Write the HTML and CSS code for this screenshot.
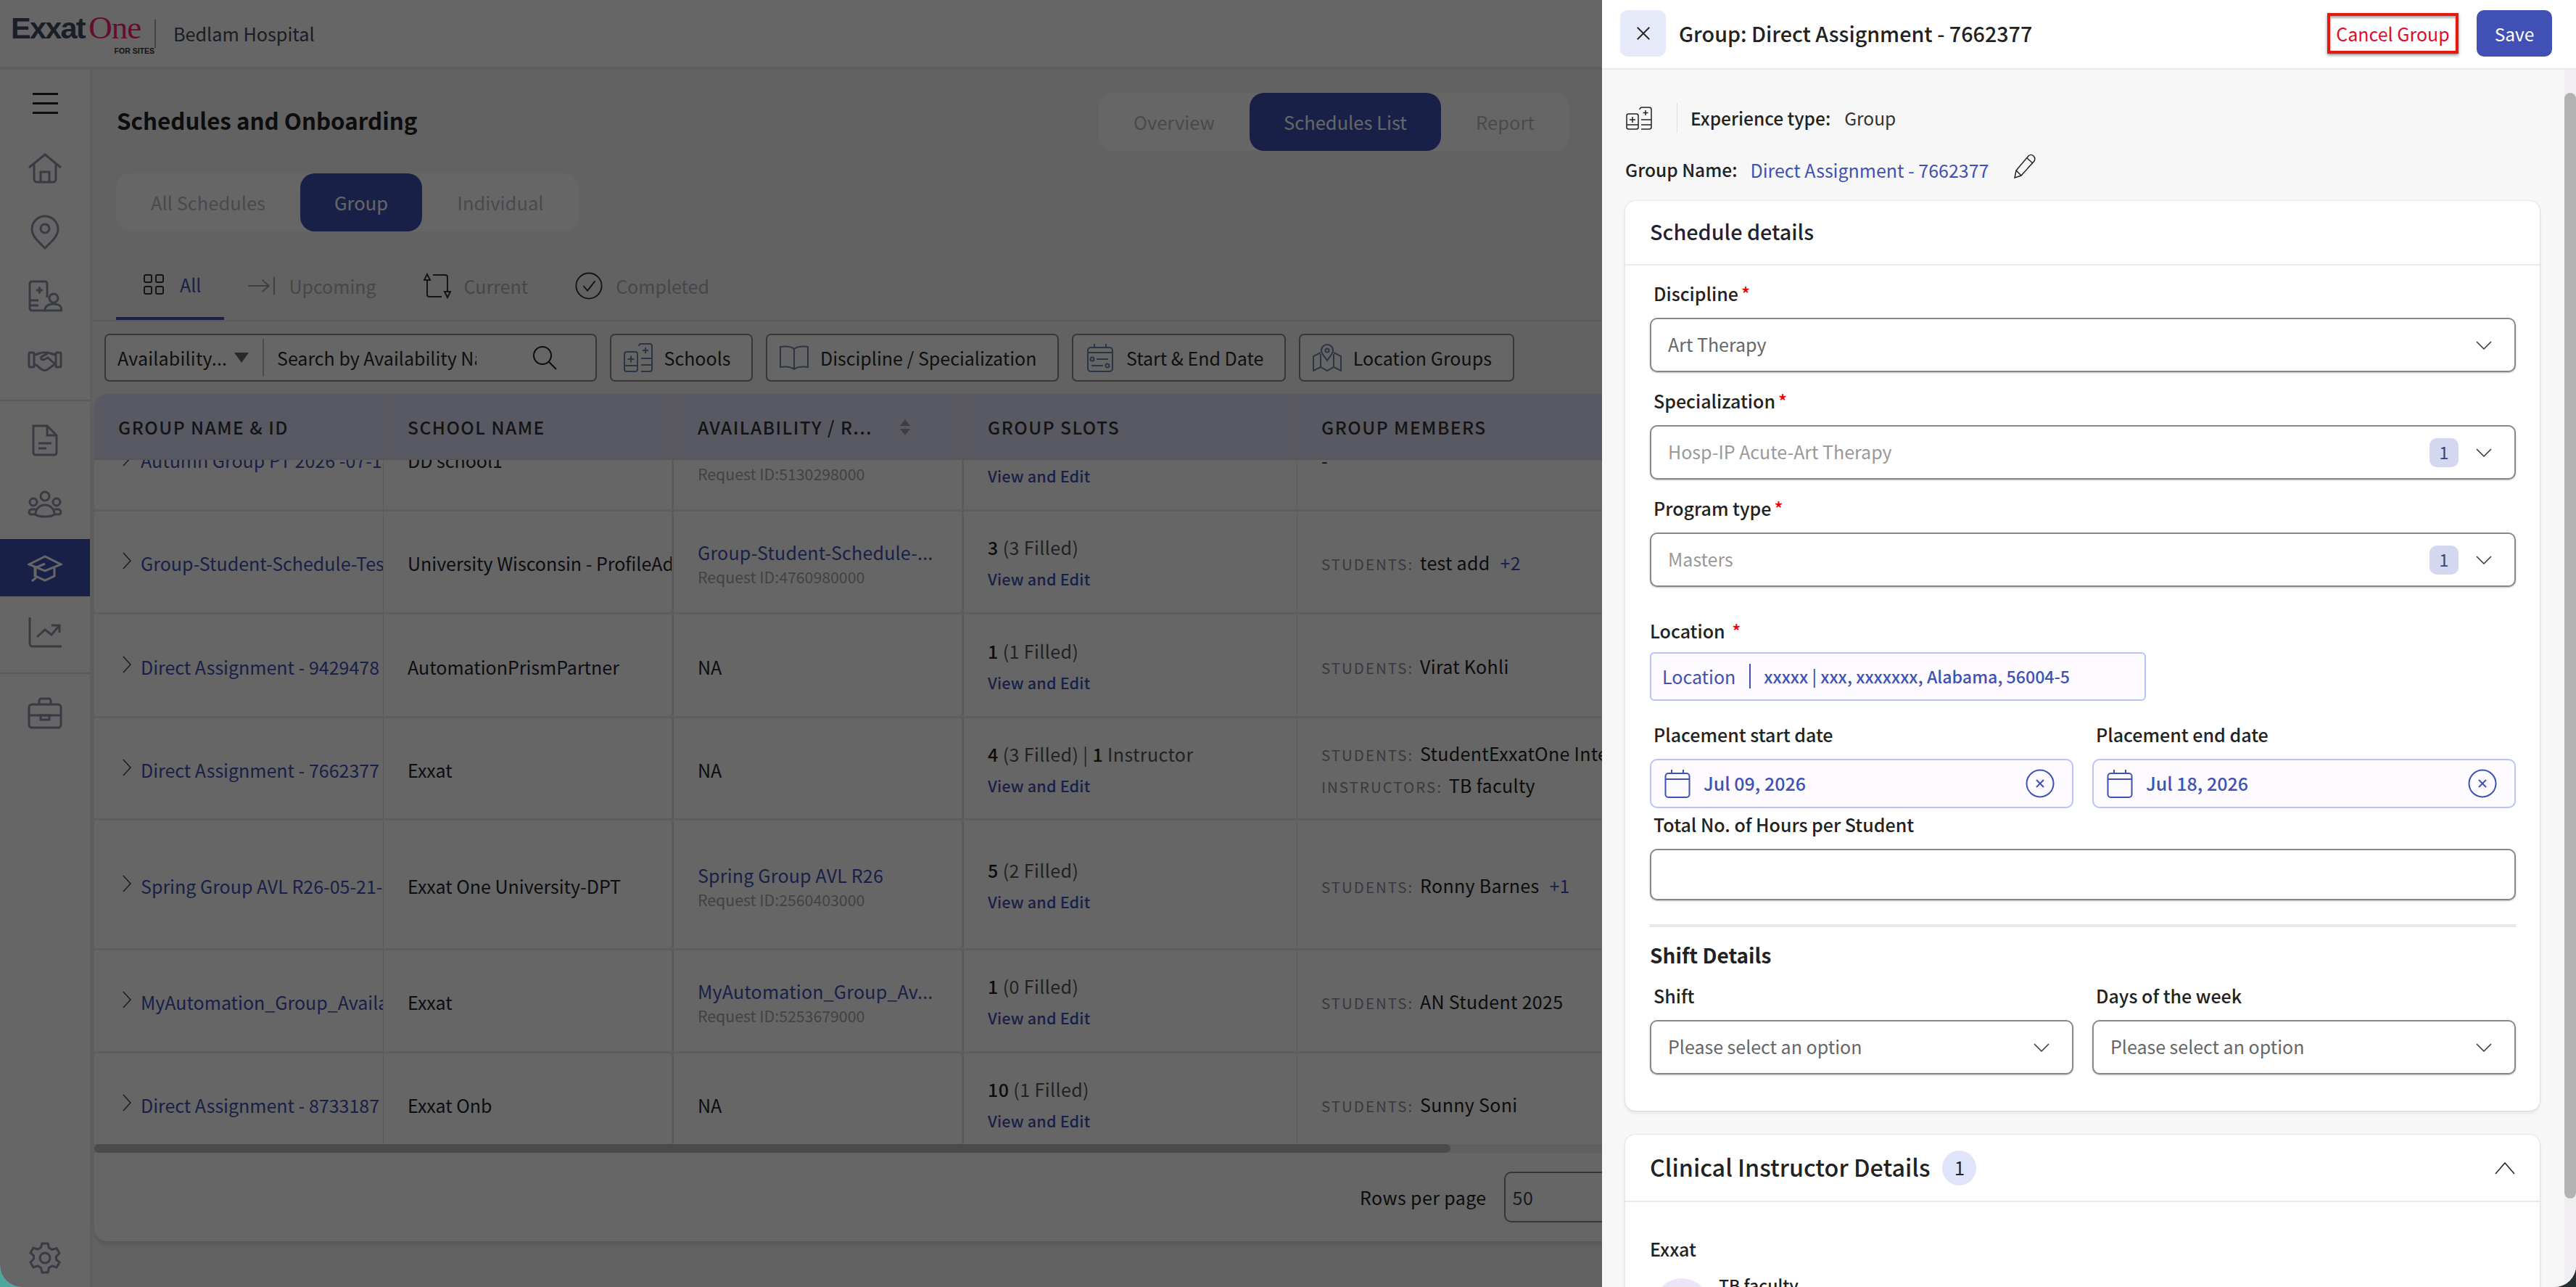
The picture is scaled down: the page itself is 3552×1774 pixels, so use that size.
FILE: index.html
```html
<!DOCTYPE html>
<html lang="en">
<head>
    <meta charset="UTF-8">
    <meta name="viewport" content="width=device-width, initial-scale=1.0">
    <title>Schedules and Onboarding</title>
    <link rel="stylesheet" href="styles.css">
</head>
<body>
<div class="app">
    <header class="app-head">
        <div class="logo">
            <div class="logo-word"><span class="logo-exxat">Exxat</span> <span class="logo-one">One</span></div>
            <div class="logo-sub">FOR SITES</div>
        </div>
        <div class="app-site">Bedlam Hospital</div>
    </header>

    <div class="app-body">
        <nav class="sidebar">
            <div class="side-menu"><span></span><span></span><span></span></div>
            <div class="side-item">
                <svg class="side-icon" viewBox="0 0 48 48"><path d="M2 23 24 5l22 18"/><path d="M9 18v21a4 4 0 0 0 4 4h22a4 4 0 0 0 4-4V18"/><path d="M18 43V29h12v14"/></svg>
            </div>
            <div class="side-item">
                <svg class="side-icon" viewBox="0 0 48 48"><path d="M24 2C14 2 6 10 6 20c0 10 10 18 18 26 8-8 18-16 18-26C42 10 34 2 24 2z"/><circle cx="24" cy="19" r="6"/></svg>
            </div>
            <div class="side-item">
                <svg class="side-icon" viewBox="0 0 48 48"><path d="M27 26V7a3 3 0 0 0-3-3H6a3 3 0 0 0-3 3v34a3 3 0 0 0 3 3h19"/><path d="M12 16h9M16.500 11.500v9"/><path d="M3 30h12M3 37h12"/><circle cx="36" cy="27" r="6"/><path d="M24 44c0-7 5-9 12-9s11 2 11 9z"/></svg>
            </div>
            <div class="side-item">
                <svg class="side-icon" viewBox="0 0 48 48"><rect x="2" y="14" width="7" height="20" rx="1.500"/><rect x="39" y="14" width="7" height="20" rx="1.500"/><path d="M9 17c5 0 7-3 12-3h6c5 0 7 3 12 3M9 31h3l7 6c3 2 6 2 9 0l11-8"/><path d="M28 15l-9 5c-2 3 2 5 5 3l4-2 9 8"/></svg>
            </div>
            <div class="side-line"></div>
            <div class="side-item">
                <svg class="side-icon" viewBox="0 0 48 48"><path d="M8 3h19l13 13v24a3 3 0 0 1-3 3H11a3 3 0 0 1-3-3V3z"/><path d="M27 3v13h13"/><path d="M15 27h18M15 34h11"/></svg>
            </div>
            <div class="side-item">
                <svg class="side-icon" viewBox="0 0 48 48"><circle cx="24" cy="12" r="6"/><circle cx="8" cy="20" r="5"/><circle cx="40" cy="20" r="5"/><path d="M11 37c0-8 6-13 13-13s13 5 13 13c-3 4-23 4-26 0z"/><path d="M11 30H5c-4 2-4 6 0 7h6M37 30h6c4 2 4 6 0 7h-6"/></svg>
            </div>
            <div class="side-item side-active">
                <svg class="side-icon" viewBox="0 0 48 48"><path d="M24 8 2 19l22 9 22-9z"/><path d="M11 24v11l13 6 13-6V24"/><path d="M24 18 10 24v12"/><path d="M6 42l6-5"/></svg>
            </div>
            <div class="side-item">
                <svg class="side-icon" viewBox="0 0 48 48"><path d="M3 4v36a4 4 0 0 0 4 4h40"/><path d="M13 31l11-10 9 7 11-13"/><path d="M33 15h11v10"/></svg>
            </div>
            <div class="side-line side-line-low"></div>
            <div class="side-item">
                <svg class="side-icon" viewBox="0 0 48 48"><rect x="2" y="12" width="44" height="32" rx="4"/><path d="M16 12V7a3 3 0 0 1 3-3h10a3 3 0 0 1 3 3v5"/><path d="M2 27h44"/><rect x="18" y="27" width="12" height="6"/></svg>
            </div>
            <div class="side-item side-gear">
                <svg class="side-icon" viewBox="0 0 48 48"><circle cx="24" cy="24" r="7"/><path d="M20 4h8l1.500 6 4.500 2.500 6-2 4 7-4.500 4.300v4.400L44 30l-4 7-6-2-4.500 2.500L28 44h-8l-1.500-6.500L14 35l-6 2-4-7 4.500-4.800v-4.400L4 17l4-7 6 2 4.500-2.500z"/></svg>
            </div>
        </nav>

        <main class="main">
            <div class="page-head">
                <h1 class="page-title">Schedules and Onboarding</h1>
                <div class="segment segment-views">
                    <span class="seg-item seg-overview">Overview</span>
                    <span class="seg-item seg-on seg-list">Schedules List</span>
                    <span class="seg-item seg-report">Report</span>
                </div>
            </div>

            <div class="segment segment-kind">
                <span class="seg-item seg-all">All Schedules</span>
                <span class="seg-item seg-on seg-group">Group</span>
                <span class="seg-item seg-indiv">Individual</span>
            </div>

            <div class="tabs">
                <div class="tab tab-on">
                    <svg class="tab-icon" viewBox="0 0 28 28"><rect x="1" y="1" width="10" height="10" rx="2"/><rect x="17" y="1" width="10" height="10" rx="2"/><rect x="1" y="17" width="10" height="10" rx="2"/><rect x="17" y="17" width="10" height="10" rx="2"/></svg>
                    <span>All</span>
                </div>
                <div class="tab">
                    <svg class="tab-icon tab-icon-wide tab-icon-dim" viewBox="0 0 37 28"><path d="M0 14h28M19 6l9 8-9 8"/><path d="M35 2v24"/></svg>
                    <span>Upcoming</span>
                </div>
                <div class="tab">
                    <svg class="tab-icon tab-icon-wide" viewBox="0 0 38 40"><path d="M5 12v20a3 3 0 0 0 3 3h17"/><path d="M13 5h17a3 3 0 0 1 3 3v20"/><path d="M1 12l4-8 4 8zM29 28l4 8 4-8z"/></svg>
                    <span>Current</span>
                </div>
                <div class="tab">
                    <svg class="tab-icon tab-icon-wide" viewBox="0 0 40 40"><circle cx="20" cy="20" r="18.500"/><path d="M12 20l6 7 11-14"/></svg>
                    <span>Completed</span>
                </div>
            </div>

            <div class="toolbar">
                <div class="search-box">
                    <span class="search-type">Availability...</span>
                    <span class="search-caret"></span>
                    <span class="search-text">Search by Availability Name</span>
                    <svg class="search-icon" viewBox="0 0 34 34"><circle cx="14" cy="14" r="12"/><path d="M23 23l10 10"/></svg>
                </div>
                <div class="chip">
                    <svg class="chip-icon" viewBox="0 0 40 40"><rect x="1" y="12" width="18" height="27" rx="3"/><path d="M5.500 22h9M10 17.500v9M1 31h18M21 4a3 3 0 0 1 3-3h12a3 3 0 0 1 3 3v32a3 3 0 0 1-3 3H24M30 6v8M26 10h8M24 21h15M24 30h15"/></svg>
                    <span>Schools</span>
                </div>
                <div class="chip">
                    <svg class="chip-icon" viewBox="0 0 40 40"><path d="M20 8C15 4 8 4 1 5v28c7-1 14-1 19 3 5-4 12-4 19-3V5c-7-1-14-1-19 3zM20 8v28"/></svg>
                    <span>Discipline / Specialization</span>
                </div>
                <div class="chip">
                    <svg class="chip-icon" viewBox="0 0 36 40"><rect x="1" y="6" width="34" height="33" rx="4"/><path d="M10 1v5M26 1v5M1 13h34M13 22h16M6 31h16"/><circle cx="7" cy="22" r="2.500"/><circle cx="28" cy="31" r="2.500"/></svg>
                    <span>Start &amp; End Date</span>
                </div>
                <div class="chip">
                    <svg class="chip-icon" viewBox="0 0 40 40"><path d="M11 13 1 18v20l10-5 9 5 9-5 10 5V18l-10-5"/><path d="M11 15v18M29 15v18"/><path d="M20 2c-5 0-8 4-8 8 0 5 5 9 8 14 3-5 8-9 8-14 0-4-3-8-8-8z"/><circle cx="20" cy="10" r="2.500"/></svg>
                    <span>Location Groups</span>
                </div>
            </div>

            <section class="table-card">
                <div class="row row-head">
                    <div class="cell"><span class="th">GROUP NAME &amp; ID</span></div>
                    <div class="cell cell-thick"><span class="th">SCHOOL NAME</span></div>
                    <div class="cell cell-thick"><span class="th">AVAILABILITY / R...</span><svg class="sort" viewBox="0 0 16 22"><path d="M8 0l7 9H1zM8 22 1 13h14z"/></svg></div>
                    <div class="cell"><span class="th">GROUP SLOTS</span></div>
                    <div class="cell cell-last"><span class="th">GROUP MEMBERS</span></div>
                </div>
                <div class="table-window">
                    <div class="table-rows">
                        <div class="row">
                            <div class="cell cell-name"><svg class="expand" viewBox="0 0 14 24"><path d="M2 1l10 11L2 23"/></svg><a class="name-link">Autumn Group PT 2026 -07-1</a></div>
                            <div class="cell cell-thick">DD school1</div>
                            <div class="cell cell-thick cell-stack"><a class="avail-link">&nbsp;</a><span class="req-id">Request ID:5130298000</span></div>
                            <div class="cell cell-stack"><span class="slots">&nbsp;</span><a class="edit-link">View and Edit</a></div>
                            <div class="cell cell-last">-</div>
                        </div>
                        <div class="row">
                            <div class="cell cell-name"><svg class="expand" viewBox="0 0 14 24"><path d="M2 1l10 11L2 23"/></svg><a class="name-link">Group-Student-Schedule-Test</a></div>
                            <div class="cell cell-thick">University Wisconsin - ProfileAd</div>
                            <div class="cell cell-thick cell-stack"><a class="avail-link">Group-Student-Schedule-...</a><span class="req-id">Request ID:4760980000</span></div>
                            <div class="cell cell-stack"><span class="slots"><b>3</b> (3 Filled)</span><a class="edit-link">View and Edit</a></div>
                            <div class="cell cell-last"><span class="member"><span class="member-key">STUDENTS:</span> test add <a class="member-more">+2</a></span></div>
                        </div>
                        <div class="row row-mid">
                            <div class="cell cell-name"><svg class="expand" viewBox="0 0 14 24"><path d="M2 1l10 11L2 23"/></svg><a class="name-link">Direct Assignment - 9429478</a></div>
                            <div class="cell cell-thick">AutomationPrismPartner</div>
                            <div class="cell cell-thick">NA</div>
                            <div class="cell cell-stack"><span class="slots"><b>1</b> (1 Filled)</span><a class="edit-link">View and Edit</a></div>
                            <div class="cell cell-last"><span class="member"><span class="member-key">STUDENTS:</span> Virat Kohli</span></div>
                        </div>
                        <div class="row row-low">
                            <div class="cell cell-name"><svg class="expand" viewBox="0 0 14 24"><path d="M2 1l10 11L2 23"/></svg><a class="name-link">Direct Assignment - 7662377</a></div>
                            <div class="cell cell-thick">Exxat</div>
                            <div class="cell cell-thick">NA</div>
                            <div class="cell cell-stack"><span class="slots"><b>4</b> (3 Filled) | <b>1</b> Instructor</span><a class="edit-link">View and Edit</a></div>
                            <div class="cell cell-last cell-members"><span class="member"><span class="member-key">STUDENTS:</span> StudentExxatOne Intern</span><span class="member"><span class="member-key">INSTRUCTORS:</span> TB faculty</span></div>
                        </div>
                        <div class="row row-tall">
                            <div class="cell cell-name"><svg class="expand" viewBox="0 0 14 24"><path d="M2 1l10 11L2 23"/></svg><a class="name-link">Spring Group AVL R26-05-21-</a></div>
                            <div class="cell cell-thick">Exxat One University-DPT</div>
                            <div class="cell cell-thick cell-stack"><a class="avail-link">Spring Group AVL R26</a><span class="req-id">Request ID:2560403000</span></div>
                            <div class="cell cell-stack"><span class="slots"><b>5</b> (2 Filled)</span><a class="edit-link">View and Edit</a></div>
                            <div class="cell cell-last"><span class="member"><span class="member-key">STUDENTS:</span> Ronny Barnes <a class="member-more">+1</a></span></div>
                        </div>
                        <div class="row">
                            <div class="cell cell-name"><svg class="expand" viewBox="0 0 14 24"><path d="M2 1l10 11L2 23"/></svg><a class="name-link">MyAutomation_Group_Availability</a></div>
                            <div class="cell cell-thick">Exxat</div>
                            <div class="cell cell-thick cell-stack"><a class="avail-link">MyAutomation_Group_Av...</a><span class="req-id">Request ID:5253679000</span></div>
                            <div class="cell cell-stack"><span class="slots"><b>1</b> (0 Filled)</span><a class="edit-link">View and Edit</a></div>
                            <div class="cell cell-last"><span class="member"><span class="member-key">STUDENTS:</span> AN Student 2025</span></div>
                        </div>
                        <div class="row">
                            <div class="cell cell-name"><svg class="expand" viewBox="0 0 14 24"><path d="M2 1l10 11L2 23"/></svg><a class="name-link">Direct Assignment - 8733187</a></div>
                            <div class="cell cell-thick">Exxat Onb</div>
                            <div class="cell cell-thick">NA</div>
                            <div class="cell cell-stack"><span class="slots"><b>10</b> (1 Filled)</span><a class="edit-link">View and Edit</a></div>
                            <div class="cell cell-last"><span class="member"><span class="member-key">STUDENTS:</span> Sunny Soni</span></div>
                        </div>
                    </div>
                </div>
                <div class="hscroll"><div class="hscroll-thumb"></div></div>
                <div class="table-foot">
                    <span>Rows per page</span>
                    <span class="rows-select">50</span>
                </div>
            </section>
        </main>
    </div>

    <div class="backdrop"></div>

    <aside class="drawer">
        <div class="drawer-head">
            <button class="btn-close">
                <svg viewBox="0 0 24 24"><path d="M3 3l18 18M21 3 3 21"/></svg>
            </button>
            <div class="drawer-title">Group: Direct Assignment - 7662377</div>
            <button class="btn-cancel">Cancel Group</button>
            <button class="btn-save">Save</button>
        </div>

        <div class="drawer-body">
            <div class="drawer-scroll">
                <div class="exp-row">
                    <svg class="exp-icon" viewBox="0 0 36 32"><rect x="1" y="10" width="16" height="21" rx="2.500"/><path d="M5 18h8M9 14v8M1 25h16M19 4a3 3 0 0 1 3-3h10a3 3 0 0 1 3 3v24a3 3 0 0 1-3 3H21M27 5v7M23.500 8.500h7M21 18h14M21 25h14"/></svg>
                    <span class="exp-label">Experience type:</span>
                    <span class="exp-value">Group</span>
                </div>
                <div class="name-row">
                    <span class="exp-label">Group Name:</span>
                    <a class="group-name">Direct Assignment - 7662377</a>
                    <svg class="pencil" viewBox="0 0 34 34"><path d="M5 23 22 3c2-2 5-2 7 0s2 5 1 7L12 30l-9 3z"/><path d="M20 6l8 7M5 23l7 7"/></svg>
                </div>

                <section class="card">
                    <h2 class="card-title">Schedule details</h2>
                    <div class="card-form">
                        <label class="field-label">Discipline<span class="req">*</span></label>
                        <div class="select">
                            <span class="select-text">Art Therapy</span>
                            <svg class="chev" viewBox="0 0 22 14"><path d="M1 2l10 10L21 2"/></svg>
                        </div>

                        <label class="field-label">Specialization<span class="req">*</span></label>
                        <div class="select">
                            <span class="select-text select-dim">Hosp-IP Acute-Art Therapy</span>
                            <span class="count">1</span>
                            <svg class="chev" viewBox="0 0 22 14"><path d="M1 2l10 10L21 2"/></svg>
                        </div>

                        <label class="field-label">Program type<span class="req">*</span></label>
                        <div class="select">
                            <span class="select-text select-dim">Masters</span>
                            <span class="count">1</span>
                            <svg class="chev" viewBox="0 0 22 14"><path d="M1 2l10 10L21 2"/></svg>
                        </div>

                        <label class="field-label field-location">Location <span class="req">*</span></label>
                        <div class="location-box">
                            <span class="loc-tag">Location</span>
                            <span class="loc-text">xxxxx | xxx, xxxxxxx, Alabama, 56004-5</span>
                        </div>

                        <div class="two-col date-labels">
                            <label class="field-label">Placement start date</label>
                            <label class="field-label">Placement end date</label>
                        </div>
                        <div class="two-col">
                            <div class="date-box">
                                <svg class="cal" viewBox="0 0 36 40"><rect x="1.500" y="6" width="33" height="33" rx="4"/><path d="M10 1v5M26 1v5M1.500 14h33"/></svg>
                                <span class="date-text">Jul 09, 2026</span>
                                <svg class="clear" viewBox="0 0 40 40"><circle cx="20" cy="20" r="18.500"/><path d="M15 15l10 10M25 15 15 25"/></svg>
                            </div>
                            <div class="date-box">
                                <svg class="cal" viewBox="0 0 36 40"><rect x="1.500" y="6" width="33" height="33" rx="4"/><path d="M10 1v5M26 1v5M1.500 14h33"/></svg>
                                <span class="date-text">Jul 18, 2026</span>
                                <svg class="clear" viewBox="0 0 40 40"><circle cx="20" cy="20" r="18.500"/><path d="M15 15l10 10M25 15 15 25"/></svg>
                            </div>
                        </div>

                        <label class="field-label field-total">Total No. of Hours per Student</label>
                        <div class="text-input"></div>

                        <div class="form-line"></div>
                        <h3 class="sub-title">Shift Details</h3>

                        <div class="two-col shift-labels">
                            <label class="field-label">Shift</label>
                            <label class="field-label">Days of the week</label>
                        </div>
                        <div class="two-col">
                            <div class="select select-last">
                                <span class="select-text">Please select an option</span>
                                <svg class="chev" viewBox="0 0 22 14"><path d="M1 2l10 10L21 2"/></svg>
                            </div>
                            <div class="select select-last">
                                <span class="select-text">Please select an option</span>
                                <svg class="chev" viewBox="0 0 22 14"><path d="M1 2l10 10L21 2"/></svg>
                            </div>
                        </div>
                    </div>
                </section>

                <section class="card card-open">
                    <div class="card-bar">
                        <h2 class="card-big">Clinical Instructor Details</h2>
                        <span class="card-count">1</span>
                        <svg class="chev-up" viewBox="0 0 28 18"><path d="M1 17 14 2l13 15"/></svg>
                    </div>
                    <div class="card-form">
                        <div class="school-name">Exxat</div>
                        <div class="person">
                            <span class="avatar"></span>
                            <span class="person-name">TB faculty</span>
                        </div>
                    </div>
                </section>
            </div>
            <div class="drawer-track"><div class="drawer-thumb"></div></div>
        </div>
    </aside>
</div>
</body>
</html>
```

FILE: styles.css
```css
* { box-sizing: border-box; }

html, body { margin: 0; height: 100%; }

body {
    background: linear-gradient(90deg, #4ea79c 0 3%, #26312f 97%);
    font-family: "Noto Sans CJK SC", "Noto Sans", sans-serif;
    font-size: 25px;
    line-height: 36px;
    color: #1f2430;
    overflow: hidden;
}

a { color: #3f51b5; }
h1, h2, h3 { margin: 0; }
button { font-family: inherit; border: none; padding: 0; }

.app {
    position: relative;
    width: 3552px;
    height: 1774px;
    background: #fff;
    border-radius: 0 0 30px 30px;
    overflow: hidden;
}

/* Top bar */
.app-head {
    display: flex;
    align-items: center;
    height: 96px;
    padding-left: 15px;
    border-bottom: 4px solid #eeeef2;
}

.logo {
    width: 198px;
    height: 64px;
    margin-top: 4px;
}

.logo-word { line-height: 44px; white-space: nowrap; word-spacing: 0; }

.logo-exxat {
    font-family: "Liberation Sans", sans-serif;
    font-weight: bold;
    font-size: 41.500px;
    letter-spacing: -1.800px;
    color: #3f4d63;
}

.logo-one {
    font-family: "Liberation Serif", serif;
    font-size: 45px;
    letter-spacing: -1px;
    color: #ff2272;
}

.logo-sub {
    font-family: "Liberation Sans", sans-serif;
    font-weight: bold;
    font-size: 10.500px;
    line-height: 12px;
    text-align: right;
    color: #333;
}

.app-site {
    padding-left: 24px;
    border-left: 2px solid #a8aab2;
    line-height: 39px;
    font-size: 25.200px;
    color: #43495e;
}

.app-body { display: flex; height: 1678px; }

/* Sidebar */
.sidebar {
    display: flex;
    flex-direction: column;
    flex: none;
    width: 128px;
    border-right: 4px solid #eeeef2;
}

.side-menu {
    display: flex;
    flex-direction: column;
    justify-content: center;
    gap: 10px;
    align-items: center;
    height: 92px;
}

.side-menu span { width: 35px; height: 3px; background: #222; }

.side-item {
    display: flex;
    align-items: center;
    justify-content: center;
    height: 88px;
}

.side-icon {
    width: 48px;
    height: 48px;
    fill: none;
    stroke: #8c93a8;
    stroke-width: 3;
}

.side-active { height: 79px; margin: 3px 0 5px; background: #3f51b5; }
.side-active .side-icon { stroke: #fff; }

.side-line { height: 2px; margin: 11px 0; background: #e4e4e8; }
.side-line-low { margin: 12px 0 10px; }
.side-gear { margin-top: auto; height: 80px; }

/* Main column */
.main { flex: 1; min-width: 0; background: #f5f5f5; }

.page-head {
    display: flex;
    align-items: center;
    justify-content: space-between;
    padding: 32px 1388px 0 33px;
}

.page-title { font-size: 31.300px; line-height: 76px; height: 80px; font-weight: 600; color: #222; }

.segment {
    display: flex;
    height: 80px;
    background: #fff;
    border-radius: 20px;
    color: #b6b9c4;
    font-size: 25.500px;
}

.segment-kind { width: 638px; margin: 31px 0 0 32px; }

.seg-item {
    display: flex;
    align-items: center;
    justify-content: center;
    flex: none;
    border-radius: 20px;
}

.seg-on { background: #3f51b5; color: #fff; }
.seg-all { width: 254px; }
.seg-group { width: 168px; }
.seg-indiv { width: 216px; }
.seg-overview { width: 208px; }
.seg-list { width: 264px; }
.seg-report { width: 177px; }

/* Status tabs */
.tabs {
    display: flex;
    height: 124px;
    padding-left: 32px;
    border-bottom: 2px solid #e2e2e6;
    color: #aeb1bc;
    font-size: 25px;
}

.tab {
    display: flex;
    align-items: center;
    gap: 18px;
    height: 122px;
    padding: 28px 32px 0 33px;
}

.tab-on {
    gap: 22px;
    padding-left: 38px;
    color: #3f51b5;
    border-bottom: 4px solid #3f51b5;
}

.tab-icon {
    flex: none;
    width: 28px;
    height: 28px;
    fill: none;
    stroke: #333;
    stroke-width: 2;
}

.tab-icon-wide { width: 38px; height: 40px; }
.tab-icon-dim { stroke: #9da1ac; }

/* Filters */
.toolbar {
    display: flex;
    gap: 17.500px;
    height: 100px;
    padding: 17px 0 0 16px;
}

.search-box, .chip {
    display: flex;
    align-items: center;
    height: 66px;
    background: #fff;
    border: 2px solid #8a8a8a;
    border-radius: 7px;
    color: #2a2a2a;
    font-size: 25px;
    white-space: nowrap;
}

.search-box { width: 679px; padding-left: 16px; }
.search-type { width: 153px; letter-spacing: .2px; }

.search-caret {
    width: 0;
    height: 0;
    margin-left: 8px;
    border: 10px solid transparent;
    border-top: 14px solid #666;
    border-bottom: 0;
}

.search-text {
    flex: none;
    width: 295px;
    margin-left: 19px;
    padding-left: 18px;
    overflow: hidden;
    line-height: 52px;
    border-left: 2px solid #bbb;
}

.search-icon {
    flex: none;
    width: 34px;
    height: 36px;
    margin-left: 77px;
    fill: none;
    stroke: #222;
    stroke-width: 2;
}

.chip { padding: 0 29px 0 17px; gap: 16px; }

.chip-icon {
    flex: none;
    width: 40px;
    height: 40px;
    fill: none;
    stroke: #6e86a8;
    stroke-width: 2;
}

/* Table */
.table-card {
    width: 3422px;
    height: 1168px;
    margin-left: 2px;
    background: #fff;
    border-radius: 18px;
    box-shadow: 0 4px 6px rgba(0, 0, 0, .12);
}

.row {
    display: grid;
    grid-template-columns: 399px 400px 400px 460px 1fr;
    height: 142px;
    border-bottom: 3px solid #ececef;
}

.row-mid { height: 143px; }
.row-low { height: 141px; }
.row-tall { height: 179px; }

.row-head {
    height: 91px;
    background: #dcdff5;
    border-radius: 18px 18px 0 0;
    border-bottom: 2px solid #d4d6e4;
}

.cell {
    display: flex;
    align-items: center;
    min-width: 0;
    padding: 3px 0 0 33px;
    border-right: 1px solid #e4e4ea;
    white-space: nowrap;
    overflow: hidden;
}

.cell-thick { border-right-width: 3px; border-right-color: #e4e4ee; }
.cell-last { border-right: 0; }
.cell-stack { flex-direction: column; align-items: flex-start; justify-content: center; }
.cell-members { flex-direction: column; align-items: flex-start; justify-content: center; gap: 6px; }

.th { font-size: 24.500px; font-weight: 500; letter-spacing: 1.500px; color: #333; }

.sort { width: 16px; height: 22px; margin-left: 37px; fill: #999; }

.table-window { height: 943px; overflow: hidden; }
.table-rows { margin-top: -71px; }

.cell-name { padding-left: 38px; }

.expand {
    flex: none;
    width: 14px;
    height: 24px;
    margin: -6px 12px 0 0;
    fill: none;
    stroke: #444;
    stroke-width: 1.500;
}

.name-link { font-size: 25px; }
.avail-link { font-size: 25px; letter-spacing: .2px; line-height: 38px; }
.req-id { font-size: 21.300px; line-height: 30px; color: #a4a6b0; }

.slots { font-size: 25px; letter-spacing: .4px; line-height: 40px; color: #555; }
.slots b { font-weight: 500; color: #222; }

.edit-link { margin-top: 4px; font-size: 21.500px; font-weight: 500; line-height: 40px; letter-spacing: .2px; }

.member { font-size: 25px; line-height: 36px; letter-spacing: .3px; color: #222; }
.member-key { margin-right: 3px; font-size: 20.500px; letter-spacing: 2px; color: #8c90a0; }
.member-more { margin-left: 8px; }

.hscroll { height: 12px; background: #eeeeee; }

.hscroll-thumb {
    width: 1870px;
    height: 12px;
    background: #bcbcbc;
    border-radius: 6px;
}

.table-foot {
    display: flex;
    align-items: center;
    gap: 24px;
    height: 122px;
    padding-left: 1745px;
    font-size: 25px;
    letter-spacing: .4px;
    color: #222;
}

.rows-select {
    width: 200px;
    height: 70px;
    padding-left: 10px;
    line-height: 66px;
    border: 2px solid #888;
    border-radius: 10px;
    color: #444;
}

.backdrop {
    position: absolute;
    inset: 0;
    background: rgba(0, 0, 0, .6);
}

/* Drawer */
.drawer {
    position: absolute;
    top: 0;
    right: 0;
    bottom: 0;
    display: flex;
    flex-direction: column;
    width: 1343px;
    background: #f7f7f7;
}

.drawer-head {
    display: flex;
    align-items: center;
    flex: none;
    height: 96px;
    padding: 0 33px 2px 25px;
    background: #fff;
    border-bottom: 2px solid #e8e9ef;
}

.btn-close {
    display: flex;
    align-items: center;
    justify-content: center;
    width: 63px;
    height: 64px;
    background: #e6e9f7;
    border-radius: 10px;
}

.btn-close svg { width: 22px; height: 22px; fill: none; stroke: #222; stroke-width: 2; }

.drawer-title {
    flex: 1;
    margin-left: 18px;
    font-size: 28.700px;
    font-weight: 500;
    color: #222;
}

.btn-cancel {
    width: 181px;
    height: 56px;
    background: #fff;
    border: 4px solid #e9180c;
    box-shadow: 0 2px 4px rgba(0, 0, 0, .45), inset 0 3px 3px rgba(0, 0, 0, .3);
    color: #e30a2c;
    font-size: 25px;
    line-height: 46px;
}

.btn-save {
    width: 104px;
    height: 64px;
    margin-left: 25px;
    background: #4050b5;
    border-radius: 10px;
    color: #fff;
    font-size: 24.500px;
}

.drawer-body { display: flex; flex: 1; min-height: 0; }

.drawer-scroll { flex: 1; min-width: 0; padding: 46px 34px 0 32px; overflow: hidden; }

.drawer-track { flex: none; width: 16px; background: #f1eef2; }

.drawer-thumb {
    height: 1524px;
    margin-top: 32px;
    background: #b2b2b2;
    border-radius: 8px;
}

.exp-row { display: flex; align-items: center; height: 41px; }

.exp-icon { width: 36px; height: 32px; margin-left: 1px; fill: none; stroke: #222; stroke-width: 1.500; }

.exp-label { font-size: 24.500px; font-weight: 500; color: #222; white-space: nowrap; }

.exp-row .exp-label {
    margin-left: 34px;
    padding-left: 18px;
    line-height: 41px;
    border-left: 1px solid #dddde2;
}

.exp-value { margin-left: 19px; font-size: 24.500px; color: #333; }

.name-row { display: flex; align-items: center; height: 40px; margin-top: 31px; }

.group-name { margin-left: 18px; font-size: 25px; }

.pencil { width: 34px; height: 34px; margin: -10px 0 0 32px; fill: none; stroke: #222; stroke-width: 1.500; }

.card {
    margin-top: 23px;
    background: #fff;
    border-radius: 14px;
    box-shadow: 0 0 2px rgba(0, 0, 0, .2), 0 3px 5px rgba(0, 0, 0, .08);
}

.card-title {
    height: 89px;
    padding-left: 34px;
    font-size: 28.800px;
    font-weight: 500;
    line-height: 84px;
    border-bottom: 2px solid #e8e8ee;
}

.card-form { padding: 22px 33px 50px 34px; }

.field-label {
    display: block;
    height: 36px;
    padding-left: 5px;
    margin-bottom: 14px;
    font-size: 25px;
    font-weight: 500;
    line-height: 33px;
    color: #222;
}

.req { margin-left: 4px; color: #e00; }

.select, .text-input {
    display: flex;
    align-items: center;
    height: 75px;
    margin-bottom: 23px;
    padding: 0 31px 0 23px;
    background: #fff;
    border: 2px solid #888;
    border-radius: 10px;
    box-shadow: 0 1px 2px rgba(0, 0, 0, .25);
}

.select-text { flex: 1; margin-top: -3px; font-size: 25px; color: #666; white-space: nowrap; line-height: 34px; }
.select-dim { color: #999; }

.count {
    width: 40px;
    height: 40px;
    margin-right: 24px;
    background: #d3d7f0;
    border-radius: 10px;
    font-size: 24px;
    line-height: 38px;
    text-align: center;
    color: #3b4680;
}

.chev { flex: none; width: 22px; height: 14px; fill: none; stroke: #333; stroke-width: 1.500; }

.field-location { margin: 44px 0 10px; padding-left: 0; }

.location-box {
    display: flex;
    align-items: center;
    width: 684px;
    height: 67px;
    padding: 0 0 2px 15px;
    background: #fdfbff;
    border: 2px solid #b7c3f6;
    border-radius: 6px;
    color: #3f51b5;
    white-space: nowrap;
}

.loc-tag { padding-right: 19px; font-size: 25px; border-right: 2px solid #3f51b5; line-height: 34px; }
.loc-text { margin-left: 18px; font-size: 23.200px; font-weight: 500; }

.two-col { display: grid; grid-template-columns: 584px 584px; gap: 26px; }
.date-labels { margin-top: 30px; }

.date-box {
    display: flex;
    align-items: center;
    height: 68px;
    padding: 0 24px 0 18px;
    background: #fdfbff;
    border: 2px solid #b7c3f6;
    border-radius: 10px;
}

.cal { flex: none; width: 36px; height: 40px; fill: none; stroke: #3f51b5; stroke-width: 2; }
.date-text { flex: 1; margin: -3px 0 0 18px; font-size: 25px; font-weight: 500; color: #3f51b5; }
.clear { flex: none; width: 40px; height: 40px; fill: none; stroke: #3f51b5; stroke-width: 2; }

.field-total { margin-top: 6px; }

.text-input { height: 71px; margin-bottom: 0; }

.form-line { height: 4px; margin-top: 33px; background: #e6e7ec; }

.sub-title { height: 36px; margin-top: 22px; font-size: 28px; line-height: 32px; font-weight: 700; color: #222; }

.shift-labels { margin-top: 20px; }

.select-last { margin-bottom: 0; }

.card-open { margin-top: 33px; }

.card-bar {
    display: flex;
    align-items: center;
    height: 93px;
    padding-right: 34px;
    padding-left: 34px;
    border-bottom: 2px solid #e8e8ee;
}

.card-big { margin-top: -3px; font-size: 32.300px; font-weight: 500; color: #222; }

.card-count {
    width: 47px;
    height: 48px;
    margin-left: 17px;
    background: #e0e4fb;
    border-radius: 50%;
    font-size: 26px;
    line-height: 46px;
    text-align: center;
}

.chev-up { width: 28px; height: 18px; margin-left: auto; fill: none; stroke: #222; stroke-width: 1.500; }

.school-name { margin-top: 24px; height: 36px; font-size: 25px; font-weight: 500; color: #222; }

.person { display: flex; gap: 12px; margin-top: 23px; padding-left: 5px; }
.avatar { width: 78px; height: 78px; border-radius: 50%; background: #ece5f8; }
.person-name { font-size: 23px; line-height: 18px; font-weight: 500; color: #222; }
```
